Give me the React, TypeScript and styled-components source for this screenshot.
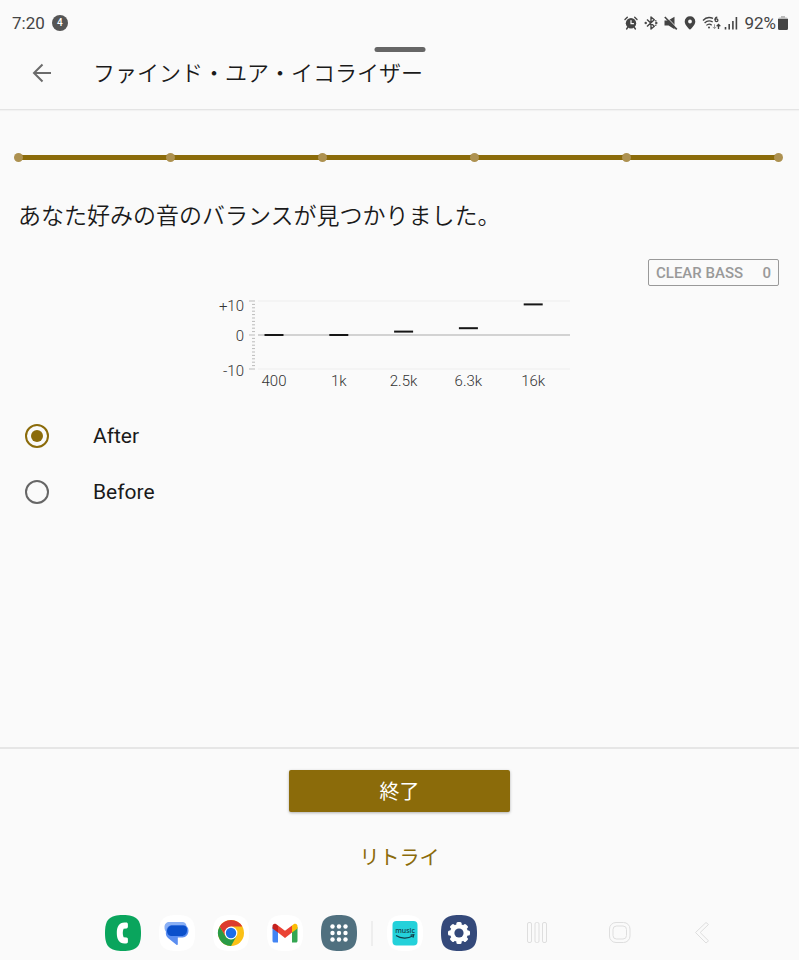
import React, { useState } from "react";
import styled, { createGlobalStyle } from "styled-components";

const GOLD = "#8b6b0a";

const GlobalStyle = createGlobalStyle`
  * { box-sizing: border-box; }
  body {
    margin: 0;
    background: #fafafa;
    color: #1a1a1a;
    font-family: Roboto, "Noto Sans CJK JP", sans-serif;
  }
  button { font-family: inherit; cursor: pointer; }
  svg { display: block; flex: none; }
`;

const Screen = styled.div`
  display: flex;
  flex-direction: column;
  min-height: 100vh;
`;

const StatusBar = styled.div`
  display: flex;
  align-items: center;
  justify-content: space-between;
  height: 46px;
  padding: 0 11px 0 12px;
  font-size: 17px;
  line-height: 20px;
  color: #444;
`;

const StatusGroup = styled.div<{ $gap: number }>`
  display: flex;
  align-items: center;
  gap: ${(p) => p.$gap}px;
`;

const CountBadge = styled.span`
  width: 16px;
  height: 16px;
  border-radius: 50%;
  background: #555;
  color: #fff;
  font-size: 10px;
  font-weight: 500;
  line-height: 16px;
  text-align: center;
`;

const Battery = styled.span`
  display: flex;
  align-items: center;
  gap: 2px;
`;

const AppBar = styled.header`
  position: relative;
  display: flex;
  align-items: center;
  gap: 34px;
  height: 64px;
  padding: 0 24px 10px;
  border-bottom: 1px solid #e4e4e4;
  box-shadow: 0 1px 1px rgba(0, 0, 0, 0.03);
`;

const DragHandle = styled.span`
  position: absolute;
  top: 1px;
  left: 50%;
  width: 51px;
  height: 5px;
  border-radius: 3px;
  background: #666;
  transform: translateX(-50%);
`;

const BackButton = styled.button`
  display: grid;
  place-items: center;
  width: 35px;
  height: 36px;
  padding: 0;
  border: 0;
  background: none;
`;

const Title = styled.h1`
  margin: 0;
  padding-top: 2px;
  font-size: 22px;
  font-weight: 350;
  line-height: 32px;
`;

const Main = styled.main`
  flex: 1;
  padding: 43px 20px 20px 18px;
`;

const Steps = styled.ol`
  display: flex;
  justify-content: space-between;
  margin: 0 -4px;
  padding: 0;
  list-style: none;
  background: linear-gradient(${GOLD}, ${GOLD}) center / calc(100% - 8px) 5px no-repeat;
`;

const Step = styled.li`
  width: 9px;
  height: 9px;
  border-radius: 50%;
  background: #ad9150;
`;

const Message = styled.h2`
  margin: 38px 0 0;
  font-size: 23px;
  font-weight: 350;
  line-height: 34px;
`;

const ClearBass = styled.div`
  display: flex;
  justify-content: space-between;
  width: 131px;
  margin: 25px 0 0 auto;
  padding: 2px 7px 0;
  border: 1px solid #999;
  border-radius: 2px;
  color: #999;
  font-size: 15px;
  font-weight: 500;
  line-height: 23px;
`;

const Chart = styled.svg`
  margin: 11px auto 0;
  font-family: Roboto, sans-serif;
  font-size: 15px;
  font-weight: 300;
  fill: #333;
`;

const Options = styled.fieldset`
  display: flex;
  flex-direction: column;
  margin: 15px 0 0;
  padding: 0;
  border: 0;
`;

const Option = styled.label`
  display: flex;
  align-items: center;
  gap: 44px;
  height: 56px;
  padding-left: 7px;
  font-size: 21px;
  line-height: 28px;
  cursor: pointer;
`;

const Radio = styled.input`
  appearance: none;
  display: grid;
  place-items: center;
  width: 24px;
  height: 24px;
  margin: 0;
  border: 2px solid #666;
  border-radius: 50%;

  &:checked { border-color: ${GOLD}; }
  &:checked::before {
    content: "";
    width: 12px;
    height: 12px;
    border-radius: 50%;
    background: ${GOLD};
  }
`;

const Actions = styled.footer`
  display: flex;
  flex-direction: column;
  align-items: center;
  gap: 26px;
  padding: 21px 20px 28px;
  border-top: 2px solid #e6e6e6;
`;

const PrimaryButton = styled.button`
  width: 221px;
  height: 42px;
  padding: 2px 0 0;
  border: 0;
  border-radius: 2px;
  background: ${GOLD};
  box-shadow: 0 1px 3px rgba(0, 0, 0, 0.3);
  color: #fff;
  font-size: 20px;
  line-height: 40px;
`;

const TextButton = styled.button`
  padding: 0 16px;
  border: 0;
  background: none;
  color: ${GOLD};
  font-size: 20px;
  line-height: 40px;
`;

const Taskbar = styled.nav`
  display: flex;
  align-items: center;
  gap: 48px;
  height: 54px;
  padding: 0 85px 0 105px;
`;

const Dock = styled.div`
  display: flex;
  align-items: center;
  gap: 14px;
`;

const DockGroup = styled.div`
  display: flex;
  gap: 18px;
`;

const DockDivider = styled.span`
  width: 2px;
  height: 25px;
  background: #eee;
`;

const AppButton = styled.button`
  width: 36px;
  height: 36px;
  padding: 0;
  border: 0;
  background: none;
`;

const NavKeys = styled.div`
  display: flex;
  flex: 1;
  justify-content: space-between;
`;

const NavKey = styled.button`
  width: 24px;
  height: 24px;
  padding: 0;
  border: 0;
  background: none;
`;

const MusicLabel = styled.text`
  font: 500 7px "Noto Sans", sans-serif;
  fill: #123c48;
`;

const AlarmIcon = () => (
  <svg width="14" height="14" viewBox="0 0 14 14" fill="none" stroke="#444" strokeLinecap="round">
    <circle cx="7" cy="7.3" r="5.2" fill="#444" stroke="none" />
    <path d="M1 3.5 3.3 1.3M13 3.5 10.7 1.3M3.6 11.5 2.6 13M10.4 11.5 11.4 13" strokeWidth="1.4" />
    <path d="M7 4.5v3.2h2.5" stroke="#fafafa" strokeWidth="1.2" />
  </svg>
);

const BluetoothIcon = () => (
  <svg width="14" height="16" viewBox="0 0 14 16" fill="none" stroke="#444" strokeWidth="1.4">
    <path d="m3 4.4 7.3 6.8L7 14V2l3.3 2.8L3 11.6" strokeLinejoin="round" />
    <circle cx="1.7" cy="8" r=".5" fill="#444" />
    <circle cx="12.3" cy="8" r=".5" fill="#444" />
    <path d="M11.8 5.8v.1M11.8 10.2v.1" strokeLinecap="round" />
  </svg>
);

const MuteIcon = () => (
  <svg width="14" height="14" viewBox="0 0 14 14">
    <path d="M.5 4.5h3.6L10.5.8v12.4L4.6 9.5H.5z" fill="#444" />
    <path d="m1.8.2 12 12.4" stroke="#fafafa" strokeWidth="1" />
    <path d="m.8 1 12 12.4" stroke="#444" strokeWidth="1.6" />
  </svg>
);

const PinIcon = () => (
  <svg width="12" height="14" viewBox="0 0 12 14">
    <path
      d="M6 .3a5.2 5.2 0 0 0-5.3 5.2C.7 9.3 6 13.8 6 13.8s5.3-4.5 5.3-8.3A5.2 5.2 0 0 0 6 .3Zm0 3.3a1.9 1.9 0 1 1 0 3.8 1.9 1.9 0 0 1 0-3.8Z"
      fill="#444"
    />
  </svg>
);

const WifiIcon = () => (
  <svg width="19" height="14" viewBox="0 0 19 14" fill="none" stroke="#444" strokeWidth="1.3">
    <path d="M1 4.5C3.5 1.6 7.5.9 11 2.4M2.6 7C4.8 4.7 8 4.3 10.7 6M4.4 9.4c1.7-1.6 3.8-1.6 5.3-.1" />
    <circle cx="7" cy="11.6" r="1" fill="#444" stroke="none" />
    <path d="M15.3 1.1c-1.5.2-2.3 1.3-2.3 2.8" />
    <circle cx="14.5" cy="4.3" r="1.4" />
    <path d="M16.5 13V8.4m-1.8 1.9 1.8-1.9 1.8 1.9" />
    <path d="M12.5 8.3v4.4m-1.7-1.8 1.7 1.8 1.7-1.8" stroke="#999" strokeWidth="1" />
  </svg>
);

const SignalIcon = () => (
  <svg width="14" height="14" viewBox="0 0 14 14" stroke="#444" strokeWidth="1.6">
    <path d="M1.5 13.5V11M5.2 13.5V8M8.9 13.5V5M12.4 13.5V1" />
  </svg>
);

const BatteryIcon = () => (
  <svg width="10" height="14" viewBox="0 0 10 14">
    <path d="M3 0h4v1.5h1.5A1.5 1.5 0 0 1 10 3v1H0V3a1.5 1.5 0 0 1 1.5-1.5H3z" fill="#bbb" />
    <path d="M0 3h10v9.5a1.5 1.5 0 0 1-1.5 1.5h-7A1.5 1.5 0 0 1 0 12.5z" fill="#444" />
  </svg>
);

const Tile = ({ fill, children }: { fill: string; children: React.ReactNode }) => (
  <svg width="36" height="36" viewBox="0 0 36 36">
    <path d="M18 0C31.5 0 36 4.5 36 18S31.5 36 18 36 0 31.5 0 18 4.5 0 18 0Z" fill={fill} />
    {children}
  </svg>
);

const PhoneIcon = () => (
  <Tile fill="#0aa55d">
    <path
      d="M19.5 7.5h1.7c1 0 1.7.7 1.7 1.7v2.6c0 .8-.5 1.5-1.4 1.6l-2.9.4c-1.1 2.6-1.1 5.8 0 8.4l2.9.4c.9.1 1.4.8 1.4 1.6v2.6c0 1-.7 1.7-1.7 1.7h-1.7c-5.5 0-7.7-4.6-7.7-10.5S14 7.5 19.5 7.5Z"
      fill="#fff"
    />
  </Tile>
);

const MessagesIcon = () => (
  <Tile fill="#fff">
    <path d="M10.5 7h13c2.2 0 3.5 1.4 4 3.5l-3 8H9A7 7 0 0 1 5.5 12C5.5 9 7.5 7 10.5 7Z" fill="#8ab0f5" />
    <path d="M14 10h10a5.5 5.5 0 0 1 5.5 5.5c0 4-2.5 7-6 7h-4.7v6.7c0 .8-.8 1-1.4.5L9 23C7 21.2 6.5 19 7 16.5 7.8 12 10 10 14 10Z" fill="#5b8ef0" />
    <path d="M13 10.5h11.2c2.3 0 3.8 1.5 3.8 3.6v1.4c0 3.4-2.4 5.5-5.5 5.5H13c-3 0-5-2-5-5s2-5.5 5-5.5Z" fill="#0b50cb" />
  </Tile>
);

const ChromeIcon = () => (
  <Tile fill="#fff">
    <circle cx="18" cy="18" r="13" fill="#fbc116" />
    <path d="M6.7 11.5 12.6 21.2 18 24.3 23.5 21.2 18 31A13 13 0 0 1 6.7 11.5Z" fill="#299b46" />
    <path d="M6.7 11.5A13 13 0 0 1 29.3 11.5H18l-5.5 9.6Z" fill="#dc3b2d" />
    <circle cx="18" cy="18" r="6.4" fill="#fff" />
    <circle cx="18" cy="18" r="5.2" fill="#1a6de8" />
  </Tile>
);

const GmailIcon = () => (
  <Tile fill="#fff">
    <path d="M5.5 12v14c0 .9.7 1.5 1.5 1.5h4V16.2Z" fill="#4385f4" />
    <path d="M30.5 12v14c0 .9-.7 1.5-1.5 1.5h-4V16.2Z" fill="#34a652" />
    <path d="M25 10.5 27 9.1c1.5-1.1 3.5 0 3.5 1.9v2.5L25 17.6Z" fill="#fbbc05" />
    <path d="M11 10.5 18 15.8l7-5.3v7.1l-7 5.3-7-5.3Z" fill="#ea4335" />
    <path d="M11 10.5 9 9.1C7.5 8 5.5 9.1 5.5 11v2.5l5.5 4.1Z" fill="#c5221f" />
  </Tile>
);

const AppsIcon = () => (
  <Tile fill="#50707f">
    {[11.5, 18, 24.5].map((y) =>
      [11.5, 18, 24.5].map((x) => <circle key={`${x}-${y}`} cx={x} cy={y} r="2.2" fill="#fff" />)
    )}
  </Tile>
);

const MusicIcon = () => (
  <Tile fill="#fff">
    <rect x="5.5" y="6" width="25" height="24.5" rx="4" fill="#24d1da" />
    <MusicLabel x="18" y="18" textAnchor="middle">music</MusicLabel>
    <path d="M9 20.5c5 3.3 12 3.3 16.5.6M23.5 20.1l3.3-.4-.8 3" fill="none" stroke="#123c48" strokeWidth="1.2" />
  </Tile>
);

const SettingsIcon = () => (
  <Tile fill="#34497a">
    {[0, 45, 90, 135].map((angle) => (
      <rect key={angle} x="15.4" y="7" width="5.2" height="22" rx="1.5" fill="#fff" transform={`rotate(${angle} 18 18)`} />
    ))}
    <circle cx="18" cy="18" r="9" fill="#fff" />
    <circle cx="18" cy="18" r="4.6" fill="#34497a" />
  </Tile>
);

const apps = [
  { name: "Phone", Icon: PhoneIcon },
  { name: "Messages", Icon: MessagesIcon },
  { name: "Chrome", Icon: ChromeIcon },
  { name: "Gmail", Icon: GmailIcon },
  { name: "Apps", Icon: AppsIcon },
];

const recentApps = [
  { name: "Amazon Music", Icon: MusicIcon },
  { name: "Settings", Icon: SettingsIcon },
];

const bands = [
  { label: "400", value: 0 },
  { label: "1k", value: 0 },
  { label: "2.5k", value: 1 },
  { label: "6.3k", value: 2 },
  { label: "16k", value: 9 },
];

const AXIS_Y = 38;
const UNIT = 3.4;

const EqualizerChart = () => (
  <Chart width="363" height="96" viewBox="0 0 363 96" role="img" aria-label="Equalizer">
    <g textAnchor="end">
      <text x="27" y="14">+10</text>
      <text x="27" y="44">0</text>
      <text x="27" y="79">-10</text>
    </g>
    <g stroke="#bbb">
      {Array.from({ length: 21 }, (_, i) => (
        <line key={i} x1={i % 10 === 0 ? 32 : 35} x2="38" y1={AXIS_Y + (i - 10) * UNIT} y2={AXIS_Y + (i - 10) * UNIT} />
      ))}
    </g>
    <path d="M41 4H353M41 72H353" stroke="#eee" />
    <path d="M41 38H353" stroke="#c4c4c4" strokeWidth="1.5" />
    {bands.map((band, i) => {
      const x = 57 + i * 64.8;
      return (
        <g key={band.label}>
          <rect x={x - 9.5} y={AXIS_Y - band.value * UNIT - 1} width="19" height="2" fill="#161616" />
          <text x={x} y="89" textAnchor="middle">{band.label}</text>
        </g>
      );
    })}
  </Chart>
);

export default function App() {
  const [choice, setChoice] = useState("After");

  return (
    <Screen>
      <GlobalStyle />
      <StatusBar>
        <StatusGroup $gap={7}>
          <span>7:20</span>
          <CountBadge>4</CountBadge>
        </StatusGroup>
        <StatusGroup $gap={6}>
          <AlarmIcon />
          <BluetoothIcon />
          <MuteIcon />
          <PinIcon />
          <StatusGroup $gap={3}>
            <WifiIcon />
            <SignalIcon />
          </StatusGroup>
          <Battery>
            92%
            <BatteryIcon />
          </Battery>
        </StatusGroup>
      </StatusBar>

      <AppBar>
        <DragHandle />
        <BackButton aria-label="戻る">
          <svg width="20" height="20" viewBox="0 0 20 20" fill="none" stroke="#6b6b6b" strokeWidth="2">
            <path d="M19 10H2M10.5 1.5 2 10l8.5 8.5" />
          </svg>
        </BackButton>
        <Title>ファインド・ユア・イコライザー</Title>
      </AppBar>

      <Main>
        <Steps>
          {[1, 2, 3, 4, 5, 6].map((step) => (
            <Step key={step} />
          ))}
        </Steps>
        <Message>あなた好みの音のバランスが見つかりました。</Message>
        <ClearBass>
          <span>CLEAR BASS</span>
          <span>0</span>
        </ClearBass>
        <EqualizerChart />
        <Options aria-label="イコライザー">
          {["After", "Before"].map((name) => (
            <Option key={name}>
              <Radio type="radio" name="sound" value={name} checked={choice === name} onChange={() => setChoice(name)} />
              {name}
            </Option>
          ))}
        </Options>
      </Main>

      <Actions>
        <PrimaryButton>終了</PrimaryButton>
        <TextButton>リトライ</TextButton>
      </Actions>

      <Taskbar>
        <Dock>
          <DockGroup>
            {apps.map(({ name, Icon }) => (
              <AppButton key={name} aria-label={name}><Icon /></AppButton>
            ))}
          </DockGroup>
          <DockDivider />
          <DockGroup>
            {recentApps.map(({ name, Icon }) => (
              <AppButton key={name} aria-label={name}><Icon /></AppButton>
            ))}
          </DockGroup>
        </Dock>
        <NavKeys>
          <NavKey aria-label="Recents">
            <svg width="24" height="24" viewBox="0 0 24 24" fill="none" stroke="#dedede">
              <rect x="2.5" y="1.5" width="4" height="20" rx="1.5" />
              <rect x="10" y="1.5" width="4" height="20" rx="1.5" />
              <rect x="17.5" y="1.5" width="4" height="20" rx="1.5" />
            </svg>
          </NavKey>
          <NavKey aria-label="Home">
            <svg width="24" height="24" viewBox="0 0 24 24" fill="none" stroke="#dedede">
              <rect x="1.5" y="1.5" width="20.5" height="20" rx="6.5" />
              <rect x="5" y="5" width="13.5" height="13" rx="3.5" />
            </svg>
          </NavKey>
          <NavKey aria-label="Back">
            <svg width="24" height="24" viewBox="0 0 24 24" fill="none" stroke="#dedede" strokeLinejoin="round">
              <path d="M16 1.5 5.5 11.5 16 22l2.5-2.2-8.3-8.3L18.5 3.5Z" />
            </svg>
          </NavKey>
        </NavKeys>
      </Taskbar>
    </Screen>
  );
}
